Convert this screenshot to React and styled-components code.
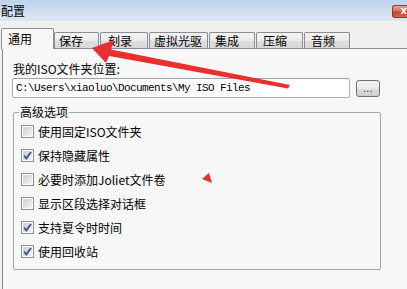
import React from "react";
import styled, { createGlobalStyle } from "styled-components";

const Global = createGlobalStyle`
  html, body { margin: 0; padding: 0; background: #f0f0f0; }
  body { font-family: "Noto Sans CJK SC", "Liberation Sans", sans-serif; }
`;

const Window = styled.div`
  position: relative;
  width: 407px;
  height: 289px;
  overflow: hidden;
  background: #f0f0f0;
  display: flex;
  flex-direction: column;
  font-size: 12px;
  color: #000;
`;

const TitleBar = styled.div`
  height: 21px;
  flex-shrink: 0;
  display: flex;
  align-items: center;
  justify-content: space-between;
  padding-left: 1px;
  background: linear-gradient(#bed3eb, #d4e2f2 70%, #dbe7f4);
`;

const Title = styled.span`
  font-size: 12px;
  line-height: 16px;
`;

const CloseButton = styled.span`
  width: 15px;
  height: 13px;
  margin-top: 1px;
  box-sizing: border-box;
  border: 1px solid #8a3a34;
  border-right: none;
  border-radius: 3px 0 0 3px;
  background: linear-gradient(#e8a497, #d2705f 45%, #c2402e 55%, #d06a55);
  display: flex;
  align-items: center;
  justify-content: flex-end;
  color: #fff;
  font-family: "DejaVu Sans", sans-serif;
  font-weight: bold;
  font-size: 10px;
  line-height: 10px;
  overflow: hidden;
`;

const TabRow = styled.div`
  height: 27px;
  flex-shrink: 0;
  display: flex;
  align-items: flex-end;
  gap: 1px;
  padding-left: 1px;
`;

const Tab = styled.div`
  box-sizing: border-box;
  width: ${(p) => p.$w}px;
  height: ${(p) => (p.$active ? 21 : 16)}px;
  margin-bottom: ${(p) => (p.$active ? -1 : 0)}px;
  margin-right: ${(p) => (p.$active ? -1 : 0)}px;
  position: relative;
  z-index: ${(p) => (p.$active ? 1 : 0)};
  border: 1px solid #898c95;
  border-bottom: none;
  border-radius: 2px 2px 0 0;
  background: ${(p) =>
    p.$active ? "#f7f7f7" : "linear-gradient(#f4f4f4, #ebebeb 50%, #dddddd 51%, #d9d9d9)"};
  padding-left: ${(p) => p.$pad}px;
  padding-top: ${(p) => (p.$active ? 2 : 0)}px;
  font-size: 12px;
  line-height: 15px;
  white-space: nowrap;
`;

const Panel = styled.div`
  flex: 1;
  margin-left: 2px;
  border-left: 1px solid #898c95;
  border-top: 1px solid #898c95;
  background: #f7f7f7;
  padding: 12px 0 0 9px;
  display: flex;
  flex-direction: column;
`;

const Label = styled.div`
  font-size: 12px;
  line-height: 16px;
  padding-left: 1px;
`;

const PathRow = styled.div`
  margin-top: 1px;
  display: flex;
  align-items: center;
  gap: 6px;
`;

const PathField = styled.div`
  box-sizing: border-box;
  width: 338px;
  height: 20px;
  background: #fff;
  border: 1px solid #abadb3;
  border-top-color: #9ea3ad;
  border-radius: 2px;
  padding-left: 3px;
  display: flex;
  align-items: center;
  font-family: "Liberation Mono", "DejaVu Sans Mono", monospace;
  font-size: 11px;
  letter-spacing: -0.6px;
  white-space: nowrap;
  overflow: hidden;
`;

const BrowseButton = styled.div`
  box-sizing: border-box;
  width: 24px;
  height: 17px;
  border: 1px solid #707070;
  border-radius: 3px;
  background: linear-gradient(#f2f2f2, #ebebeb 50%, #dddddd 51%, #cfcfcf);
  display: flex;
  justify-content: center;
  align-items: flex-end;
  padding-bottom: 3px;
  font-family: "Liberation Sans", sans-serif;
  font-size: 10px;
  line-height: 8px;
  letter-spacing: 0.5px;
  color: #222;
`;

const Group = styled.fieldset`
  margin: 6px 0 0 1px;
  width: 368px;
  box-sizing: border-box;
  min-inline-size: 0;
  border: 1px solid #a5a5a5;
  border-radius: 2px;
  padding: 0 0 6px 7px;
`;

const Legend = styled.legend`
  font-size: 12px;
  line-height: 16px;
  padding: 0 1px;
  margin-left: -2px;
`;

const OptionRow = styled.label`
  display: flex;
  align-items: center;
  gap: 4px;
  height: 24px;
  font-size: 12px;
  &:first-of-type { margin-top: -1px; }
`;

const Box = styled.span`
  box-sizing: border-box;
  width: 13px;
  height: 13px;
  flex-shrink: 0;
  border: 1px solid #8e8f8f;
  background: #fff;
  padding: 1px;
  display: flex;
`;

const BoxInner = styled.span`
  flex: 1;
  background: linear-gradient(135deg, #cbcfd5, #f4f4f4);
  display: flex;
  align-items: center;
  justify-content: center;
`;

const Overlay = styled.svg`
  position: absolute;
  left: 0;
  top: 0;
  pointer-events: none;
  z-index: 5;
`;

const tabs = [
  { t: "通用", w: 53, pad: 6, active: true },
  { t: "保存", w: 45, pad: 4 },
  { t: "刻录", w: 48, pad: 7 },
  { t: "虚拟光驱", w: 59, pad: 4 },
  { t: "集成", w: 46, pad: 5 },
  { t: "压缩", w: 47, pad: 6 },
  { t: "音频", w: 46, pad: 6 },
];

const options = [
  { t: "使用固定ISO文件夹", c: false },
  { t: "保持隐藏属性", c: true },
  { t: "必要时添加Joliet文件卷", c: false },
  { t: "显示区段选择对话框", c: false },
  { t: "支持夏令时时间", c: true },
  { t: "使用回收站", c: true },
];

function Check({ checked }) {
  return (
    <Box>
      <BoxInner>
        {checked && (
          <svg width="9" height="9" viewBox="0 0 9 9">
            <path d="M1 4.5 L3.3 7.5 L8 1" fill="none" stroke="#3d4d9a" strokeWidth="1.8" />
          </svg>
        )}
      </BoxInner>
    </Box>
  );
}

export default function App() {
  return (
    <>
      <Global />
      <Window>
        <TitleBar>
          <Title>配置</Title>
          <CloseButton>x</CloseButton>
        </TitleBar>
        <TabRow>
          {tabs.map((tb) => (
            <Tab key={tb.t} $w={tb.w} $pad={tb.pad} $active={tb.active}>
              {tb.t}
            </Tab>
          ))}
        </TabRow>
        <Panel>
          <Label>我的ISO文件夹位置:</Label>
          <PathRow>
            <PathField>C:\Users\xiaoluo\Documents\My ISO Files</PathField>
            <BrowseButton>...</BrowseButton>
          </PathRow>
          <Group>
            <Legend>高级选项</Legend>
            {options.map((o) => (
              <OptionRow key={o.t}>
                <Check checked={o.c} />
                <span>{o.t}</span>
              </OptionRow>
            ))}
          </Group>
        </Panel>
        <Overlay width="407" height="289" viewBox="0 0 407 289">
          <polygon
            points="92,48 114,40 111,49.5 290,85 288,88.5 109,56 106,63"
            fill="#e8312e"
          />
          <polygon points="202,179 209,173 212,183" fill="#e8312e" />
        </Overlay>
      </Window>
    </>
  );
}
